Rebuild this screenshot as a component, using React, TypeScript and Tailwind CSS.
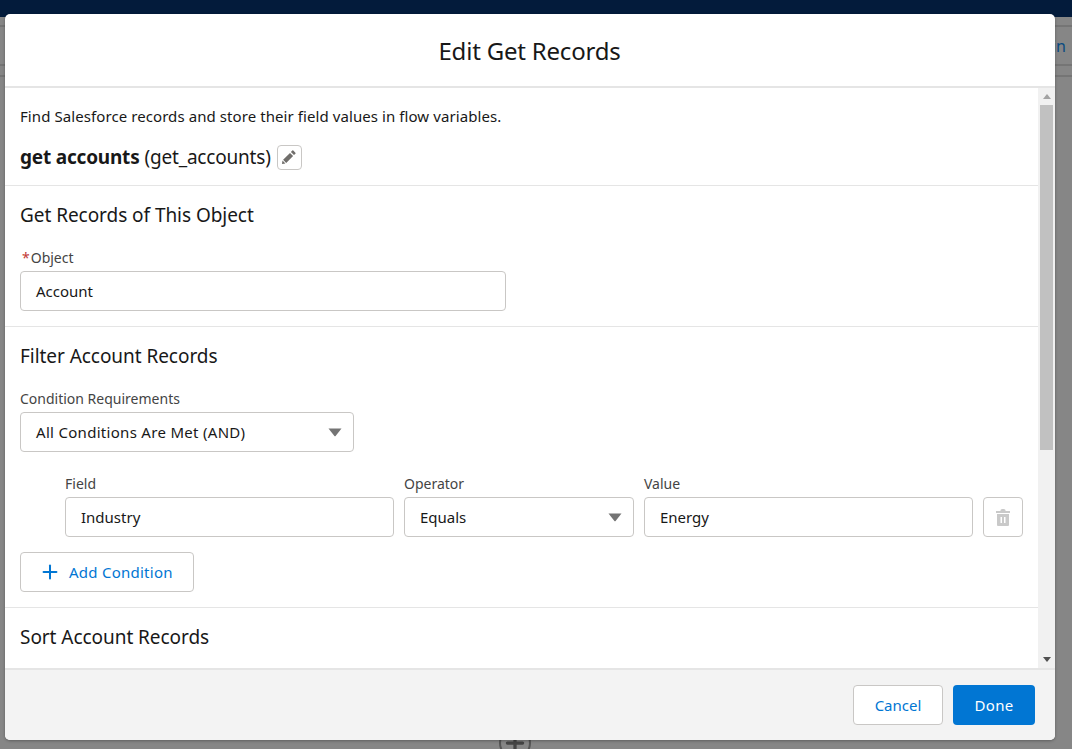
import { Plus } from "lucide-react";

const fieldBox = "h-10 rounded border border-[#c9c7c5] bg-white flex items-center text-[15px] text-[#181818]";

const Caret = () => (
  <svg width="14" height="9" viewBox="0 0 14 9" className="shrink-0">
    <path d="M0.5 0.5h13L7.6 8a.8.8 0 0 1-1.2 0z" fill="#747474" />
  </svg>
);

const PencilIcon = () => (
  <svg width="14" height="14" viewBox="0 0 14 14">
    <path d="M10.3 0.6a.7.7 0 0 1 1 0l2.1 2.1a.7.7 0 0 1 0 1L12 5.1 8.9 2zM8 2.9L11.1 6l-6.9 6.9-3.1-3.1zM0.5 10.6l2.9 2.9-3 .5a.4.4 0 0 1-.4-.4z" fill="#706e6b" />
  </svg>
);

const TrashIcon = () => (
  <svg width="14" height="17" viewBox="0 0 14 17">
    <path d="M5 2V1h4v1h5v2H0V2z" fill="#c9c9c9" />
    <path d="M5 2.5V1a.5.5 0 0 1 .5-.5h3a.5.5 0 0 1 .5.5v1.5" fill="none" stroke="#c9c9c9" />
    <path d="M1 5h12v11a1 1 0 0 1-1 1H2a1 1 0 0 1-1-1zM4.5 8v6h1.5V8zM8 8v6h1.5V8z" fill="#c9c9c9" fillRule="evenodd" />
  </svg>
);

const Field = ({ label, value, className, caret, valueClass }: { label: string; value: string; className?: string; caret?: boolean; valueClass?: string }) => (
  <div className={className}>
    <div className="text-sm leading-[18px] text-[#444444] pt-[1px] mb-[4px]">{label}</div>
    <div className={`${fieldBox} pl-[15px] pr-[11px] justify-between`}>
      <span className={valueClass}>{value}</span>
      {caret && <Caret />}
    </div>
  </div>
);

const App = () => {
  return (
    <div className="relative w-[1072px] h-[749px] overflow-hidden bg-[#868686] font-['Noto_Sans',sans-serif]">
      {/* page behind the modal */}
      <div className="h-[17px] bg-[#031b3b]" />
      <div className="h-[10px] border-b-2 border-[#757575]" />
      <div className="flex justify-end pr-[6px] h-[39px] border-b-2 border-[#757575] items-center text-base text-[#0a4a80]">
        <span>in</span>
      </div>
      <div className="h-[11px] border-b-2 border-[#757575]" />

      <div className="absolute left-[499px] top-[727px] w-[32px] h-[32px] rounded-full border-2 border-[#555555] flex items-center justify-center">
        <Plus size={26} strokeWidth={3} className="text-[#444444]" />
      </div>

      {/* modal */}
      <div className="absolute left-[5px] top-[14px] w-[1050px] h-[726px] rounded-[5px] overflow-hidden bg-white flex flex-col shadow-[0_1px_3px_rgba(0,0,0,0.3)]">
        <div className="h-[74px] shrink-0 border-b-2 border-[#e5e5e5] flex items-center justify-center pr-[1px] pt-[2px]">
          <h1 className="text-2xl leading-[28px] text-[#181818] tracking-[-0.2px]">Edit Get Records</h1>
        </div>

        <div className="flex-1 min-h-0 flex">
          <div className="flex-1 min-w-0 overflow-hidden">
            <section className="h-[98px] border-b border-[#e5e5e5] px-[15px] pt-[18px]">
              <p className="text-[15px] leading-[20px] text-[#181818] tracking-[0.08px]">
                Find Salesforce records and store their field values in flow variables.
              </p>
              <div className="mt-[18px] flex items-center h-[26px] text-[19px] text-[#181818] tracking-[-0.2px]">
                <span className="font-bold">get accounts</span>
                <span className="ml-[5px]">(get_accounts)</span>
                <button className="ml-[6px] w-[25px] h-[25px] rounded border border-[#c9c7c5] flex items-center justify-center">
                  <PencilIcon />
                </button>
              </div>
            </section>

            <section className="h-[141px] border-b border-[#e5e5e5] px-[15px] pt-[17px]">
              <h2 className="text-[19px] leading-[24px] text-[#181818] tracking-[-0.05px]">Get Records of This Object</h2>
              <div className="mt-[22px] text-sm leading-[18px] text-[#444444] mb-[4px]">
                <span className="text-[#c23934] ml-[2px] mr-[1px]">*</span>Object
              </div>
              <div className={`${fieldBox} w-[486px] px-[15px]`}>Account</div>
            </section>

            <section className="h-[281px] border-b border-[#e5e5e5] px-[15px] pt-[17px]">
              <h2 className="text-[19px] leading-[24px] text-[#181818] tracking-[-0.05px]">Filter Account Records</h2>
              <Field label="Condition Requirements" value="All Conditions Are Met (AND)" valueClass="tracking-[0.3px]" caret className="mt-[21px] w-[334px]" />
              <div className="mt-[22px] pl-[45px] flex gap-[10px] items-end">
                <Field label="Field" value="Industry" className="w-[329px]" />
                <Field label="Operator" value="Equals" caret className="w-[230px]" />
                <Field label="Value" value="Energy" className="w-[329px]" />
                <button className="w-10 h-10 rounded border border-[#c9c7c5] flex items-center justify-center">
                  <TrashIcon />
                </button>
              </div>
              <button className="mt-[15px] h-10 w-[174px] rounded border border-[#c9c7c5] flex items-center pl-[18px] gap-[8px] text-[15px] tracking-[0.25px] text-[#0176d3]">
                <Plus size={22} strokeWidth={2.2} />
                <span>Add Condition</span>
              </button>
            </section>

            <section className="px-[15px] pt-[17px]">
              <h2 className="text-[19px] leading-[24px] text-[#181818] tracking-[-0.05px]">Sort Account Records</h2>
            </section>
          </div>

          {/* scrollbar */}
          <div className="w-[17px] shrink-0 bg-[#f1f1f1] flex flex-col items-center">
            <div className="h-[17px] flex items-center justify-center">
              <svg width="8" height="5" viewBox="0 0 8 5"><path d="M4 0l4 5H0z" fill="#a3a3a3" /></svg>
            </div>
            <div className="w-[13px] h-[345px] bg-[#c1c1c1]" />
            <div className="flex-1" />
            <div className="h-[17px] flex items-center justify-center">
              <svg width="8" height="5" viewBox="0 0 8 5"><path d="M0 0h8L4 5z" fill="#505050" /></svg>
            </div>
          </div>
        </div>

        <div className="h-[72px] shrink-0 bg-[#f3f3f3] border-t-2 border-[#e5e5e5] flex items-center justify-end gap-[10px] pr-5">
          <button className="w-[90px] h-10 rounded border border-[#c9c7c5] bg-white text-[15px] text-[#0176d3]">Cancel</button>
          <button className="w-[82px] h-10 rounded bg-[#0176d3] text-[15px] tracking-[0.3px] text-white">Done</button>
        </div>
      </div>
    </div>
  );
};

export default App;
